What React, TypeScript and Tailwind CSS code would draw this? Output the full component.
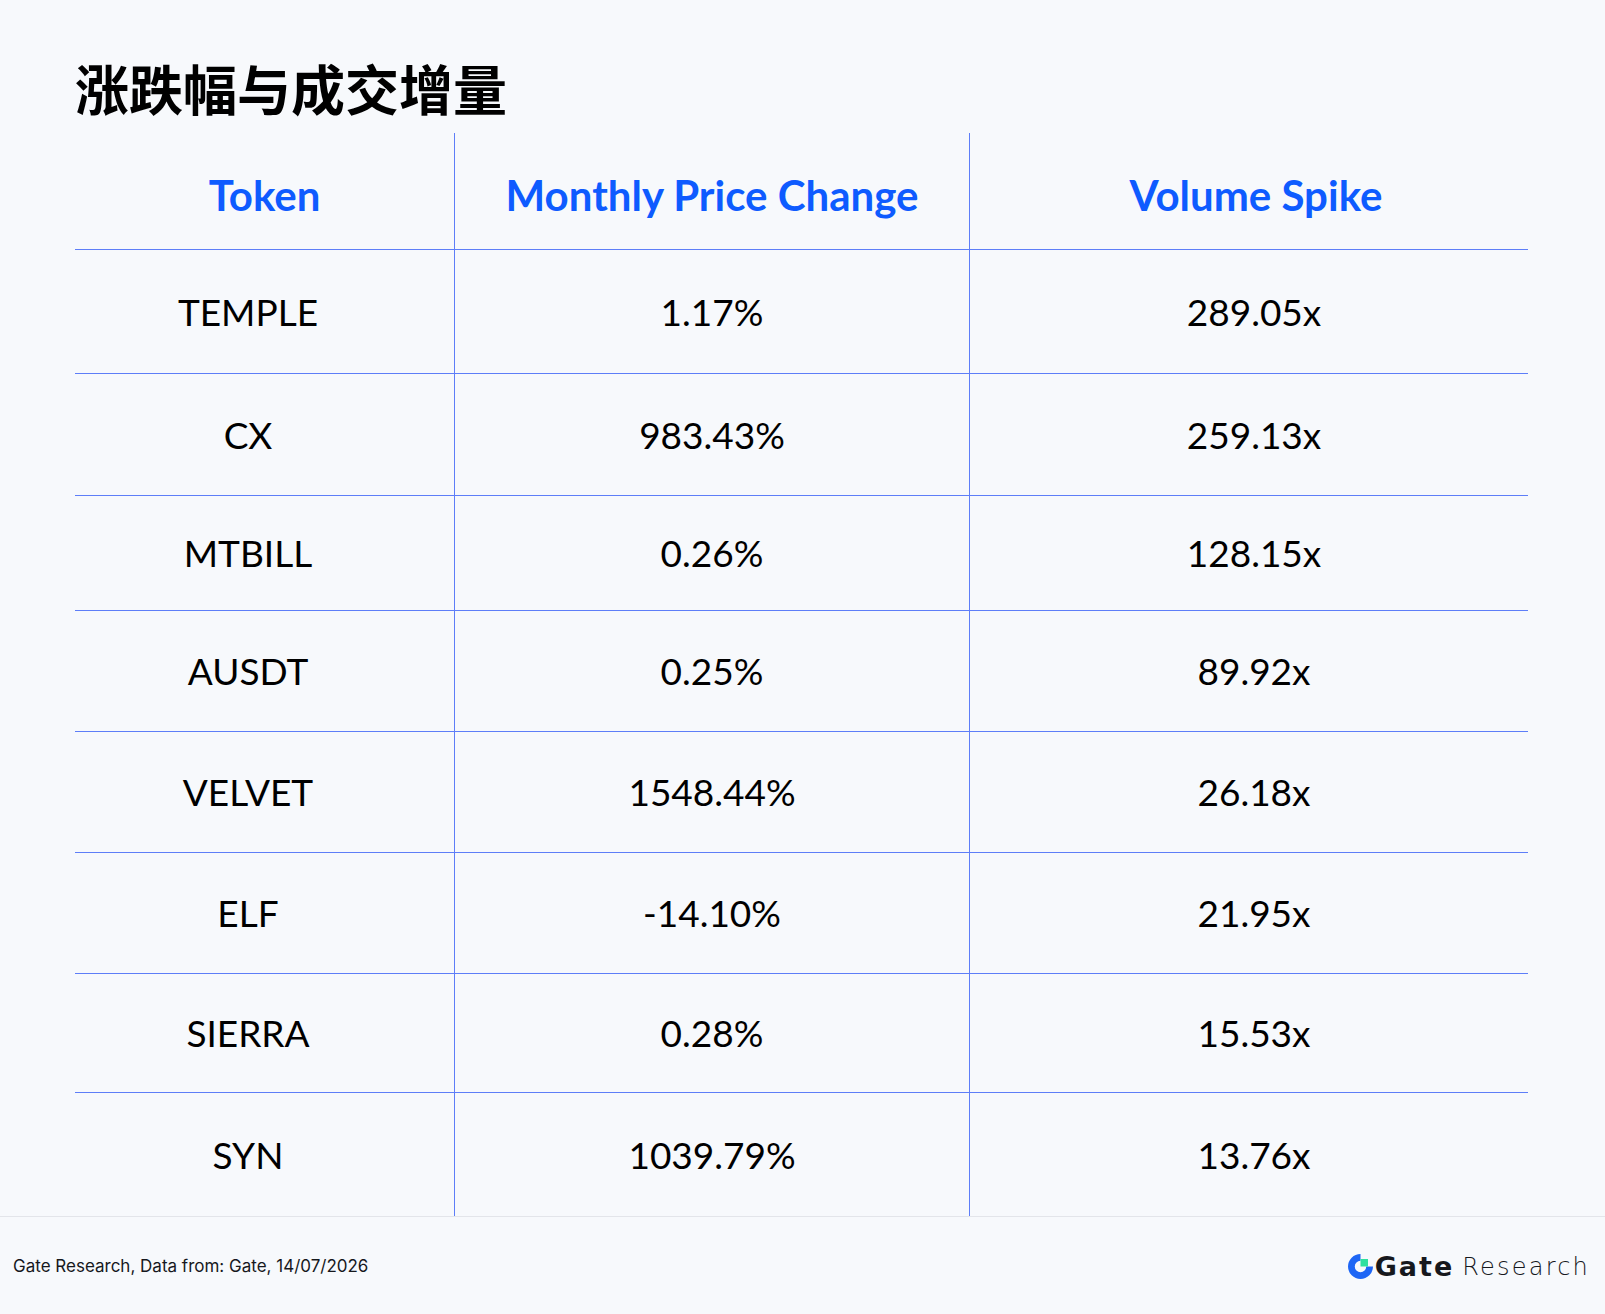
const HEAD = ['Token', 'Monthly Price Change', 'Volume Spike']

const ROWS: { token: string; change: string; spike: string; h: string }[] = [
  { token: 'TEMPLE', change: '1.17%', spike: '289.05x', h: 'h-[124px]' },
  { token: 'CX', change: '983.43%', spike: '259.13x', h: 'h-[122px]' },
  { token: 'MTBILL', change: '0.26%', spike: '128.15x', h: 'h-[115px]' },
  { token: 'AUSDT', change: '0.25%', spike: '89.92x', h: 'h-[121px]' },
  { token: 'VELVET', change: '1548.44%', spike: '26.18x', h: 'h-[121px]' },
  { token: 'ELF', change: '-14.10%', spike: '21.95x', h: 'h-[121px]' },
  { token: 'SIERRA', change: '0.28%', spike: '15.53x', h: 'h-[119px]' },
  { token: 'SYN', change: '1039.79%', spike: '13.76x', h: 'h-[123px]' },
]

function GateLogo() {
  return (
    <div className="flex items-center">
      <svg width="25" height="25" viewBox="0 0 24 24" className="mr-[2px]">
        <path d="M12 0 A12 12 0 1 0 24 12 H17.5 A5.5 5.5 0 1 1 12 6.5 Z" fill="#1E66F5" />
        <rect x="12" y="4.8" width="7.2" height="7.2" fill="#2FE0A0" />
      </svg>
      <span className="text-[27px] font-bold tracking-[2px] text-[#16181d] leading-none font-['DejaVu_Sans',sans-serif]">Gate</span>
      <span className="ml-[8px] text-[24px] font-extralight tracking-[2.2px] text-[#16181d] leading-none font-['DejaVu_Sans',sans-serif]">Research</span>
    </div>
  )
}

export default function App() {
  return (
    <div className="w-[1605px] h-[1314px] bg-[#F7F9FC] flex flex-col font-['Lato','Noto_Sans_CJK_SC',sans-serif]">
      <h1 className="ml-[75px] mt-[57px] text-[54px] font-bold leading-[62px] text-black font-['Noto_Sans_CJK_SC',sans-serif]">
        涨跌幅与成交增量
      </h1>

      <div className="ml-[75px] mt-[14px] w-[1453px] grid grid-cols-[380px_515px_558px]">
        {HEAD.map((h, i) => (
          <div key={h}
            className={`h-[117px] flex items-center justify-center border-b border-[#5E7EF8] pt-[8px] text-[42px] font-bold text-[#0E5BFF] ${i < 2 ? 'border-r' : 'pl-[14px]'}`}>
            {h}
          </div>
        ))}
        {ROWS.map((r, ri) => {
          const last = ri === ROWS.length - 1
          const cls = `${r.h} flex items-center justify-center text-[37px] text-black ${last ? '' : 'border-b border-[#5E7EF8]'}`
          return [
            <div key={r.token + 'a'} className={`${cls} border-r border-r-[#5E7EF8] pr-[33px]`}>{r.token}</div>,
            <div key={r.token + 'b'} className={`${cls} border-r border-r-[#5E7EF8]`}>{r.change}</div>,
            <div key={r.token + 'c'} className={`${cls} pl-[10px]`}>{r.spike}</div>,
          ]
        })}
      </div>

      <div className="h-px bg-[#E3E5EA]" />

      <div className="flex-1 flex items-center justify-between pl-[13px] pr-[15px] pt-[2px]">
        <span className="text-[17px] text-[#16181d] font-['Inter',sans-serif]">Gate Research, Data from: Gate, 14/07/2026</span>
        <GateLogo />
      </div>
    </div>
  )
}
